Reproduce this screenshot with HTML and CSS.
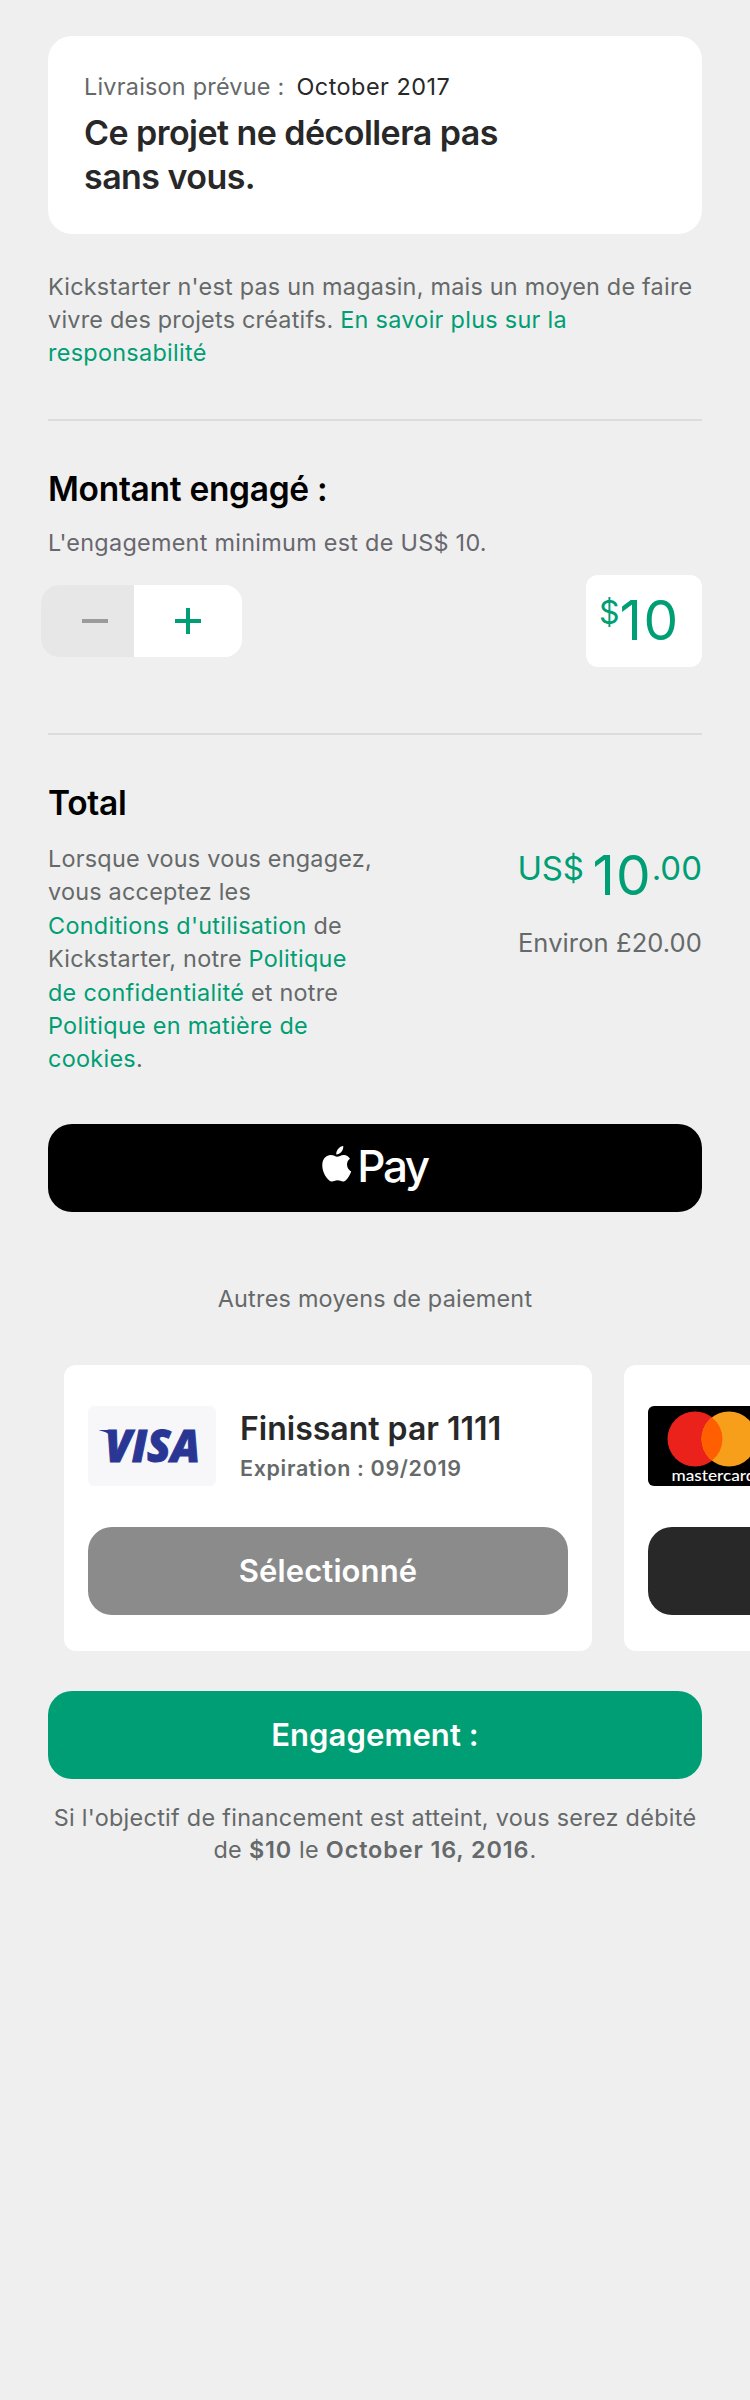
FILE: index.html
```
<!DOCTYPE html>
<html lang="fr">
<head>
<meta charset="utf-8">
<title>Engagement</title>
<link rel="stylesheet" href="styles.css">
</head>
<body>
<main class="page">
  <section class="delivery">
    <p class="body delivery-date"><span>Livraison prévue :</span><span class="dark">October 2017</span></p>
    <p class="delivery-title">Ce projet ne décollera pas<br>sans vous.</p>
  </section>
  <p class="body disclaimer">Kickstarter n'est pas un magasin, mais un moyen de faire<br>vivre des projets créatifs. <a class="link">En savoir plus sur la<br>responsabilité</a></p>
  <hr class="divider">
  <h2 class="heading">Montant engagé :</h2>
  <p class="body minimum">L'engagement minimum est de US$ 10.</p>
  <div class="amount-row">
    <div class="stepper">
      <button class="step minus" aria-label="Moins"><svg width="28" height="28" viewBox="0 0 28 28"><path d="M1 14H27"/></svg></button>
      <button class="step plus" aria-label="Plus"><svg width="28" height="28" viewBox="0 0 28 28"><path d="M1 14H27M14 1V27"/></svg></button>
    </div>
    <div class="amount-box"><span class="currency">$</span><span class="value">10</span></div>
  </div>
  <hr class="divider second">
  <h2 class="heading">Total</h2>
  <div class="total-row">
    <p class="body terms">Lorsque vous vous engagez,<br>vous acceptez les<br><a class="link">Conditions d'utilisation</a> de<br>Kickstarter, notre <a class="link">Politique<br>de confidentialité</a> et notre<br><a class="link">Politique en matière de<br>cookies</a>.</p>
    <div class="total">
      <div class="total-value"><span class="total-small">US$</span><span class="total-big">10</span><span class="total-small cents">.00</span></div>
      <div class="approx">Environ £20.00</div>
    </div>
  </div>
  <button class="button apple-pay">
    <svg width="30" height="37" viewBox="0 0 30 37"><path d="M21.3 0C21.6 4.600 17.900 8.500 14.300 8.400C13.900 4.300 17.700.300 21.300 0ZM28 12.800C26.200 14 25 15.800 25 18.600C25 21.900 26.900 24.400 29.200 25.400C28.200 28.600 26.300 31.600 24.100 33.900C21 37 18.800 34.300 15.500 34.300C12 34.300 10.300 37 7.300 34.500C3 31 0 24.200.300 18.500C.500 12.500 4.500 9 8.700 9C11.500 9 13.500 10.700 15.200 10.700C17 10.700 19 8.800 22 8.900C24.500 9 26.500 10.200 28 12.800Z"/></svg>
    <span>Pay</span>
  </button>
  <p class="body others">Autres moyens de paiement</p>
  <div class="cards">
    <article class="card">
      <div class="card-head">
        <svg class="brand" width="128" height="80" viewBox="0 0 128 80"><rect width="128" height="80" rx="6" fill="#f7f7fa"/><g fill="#2a3694"><text class="visa-text" x="17" y="55.500" textLength="95" lengthAdjust="spacingAndGlyphs">VISA</text><path d="M10.500 24H25.500L27 34C23.500 28.500 17 25.500 10.500 24Z"/></g></svg>
        <div><div class="card-name">Finissant par 1111</div><div class="card-exp">Expiration : 09/2019</div></div>
      </div>
      <button class="button selected">Sélectionné</button>
    </article>
    <article class="card">
      <div class="card-head">
        <svg class="brand" width="128" height="80" viewBox="0 0 128 80"><rect width="128" height="80" rx="6"/><circle cx="47" cy="33" r="27.500" fill="#eb221c"/><circle cx="81" cy="33" r="27.500" fill="#f79f1a"/><path d="M64 11.400A27.500 27.500 0 0 1 64 54.600A27.500 27.500 0 0 1 64 11.400Z" fill="#ff5f00"/><text class="mc-text" x="23.500" y="74.500" textLength="84" lengthAdjust="spacingAndGlyphs">mastercard</text></svg>
      </div>
      <button class="button other"></button>
    </article>
  </div>
  <button class="button engage">Engagement :</button>
  <p class="body final">Si l'objectif de financement est atteint, vous serez débité<br>de <b>$10</b> le <b>October 16, 2016</b>.</p>
</main>
</body>
</html>
```
FILE: styles.css
```
* { box-sizing: border-box; }
body { margin: 0; background: #efefef; font-family: Inter, "Liberation Sans", sans-serif; }
p, h2 { margin: 0; }
button { border: 0; padding: 0; font: inherit; }
.page { height: 2400px; padding: 36px 48px 0; overflow: hidden; }
.body { font-size: 23.4px; line-height: 33px; letter-spacing: 0.23px; color: #656969; white-space: nowrap; }
.link { color: #009e74; letter-spacing: 0.3px; }
.dark { color: #282828; letter-spacing: 0.5px; }
.delivery { height: 198px; padding: 34px 36px 0; border-radius: 24px; background: #fff; }
.delivery-date { display: flex; gap: 12px; }
.delivery-title { margin-top: 8px; font-size: 34px; line-height: 44px; font-weight: 600; letter-spacing: -0.55px; color: #282828; white-space: nowrap; }
.disclaimer { margin-top: 36px; }
.divider { height: 2px; margin: 50px 0 48px; border: 0; background: #dcdcdc; }
.divider.second { margin-top: 66px; }
.heading { font-size: 33.500px; line-height: 40px; font-weight: 600; letter-spacing: -0.3px; color: #000; }
.minimum { margin-top: 17px; letter-spacing: 0.28px; color: #68676e; }
.amount-row { display: flex; justify-content: space-between; align-items: center; height: 92px; margin-top: 16px; }
.stepper { display: flex; width: 201px; height: 72px; margin-left: -7px; border-radius: 18px; overflow: hidden; background: #fff; }
.step { display: flex; align-items: center; background: #fff; }
.step path { fill: none; stroke: #009e74; stroke-width: 4; }
.minus { width: 93px; padding-left: 40px; background: #e7e7e7; }
.minus path { stroke: #9b9b9b; }
.plus { width: 108px; padding-left: 40px; }
.amount-box { display: flex; width: 116px; height: 92px; padding: 14px 0 0 13px; border-radius: 12px; background: #fff; color: #009e74; }
.currency { font-size: 32px; line-height: 48px; }
.value { font-size: 55px; line-height: 62px; letter-spacing: 1.5px; }
.total-row { display: flex; justify-content: space-between; margin-top: 19px; }
.terms { line-height: 33.4px; }
.total { text-align: right; white-space: nowrap; }
.total-value { display: flex; justify-content: flex-end; height: 62px; color: #009e74; }
.total-small { font-size: 33px; line-height: 52px; letter-spacing: -0.3px; }
.total-big { margin-left: 9px; font-size: 55px; line-height: 66px; letter-spacing: 1px; }
.cents { letter-spacing: 0; }
.approx { margin-top: 19px; font-size: 25.500px; line-height: 40px; letter-spacing: 0.1px; color: #656969; }
.button { display: flex; align-items: center; justify-content: center; width: 100%; height: 88px; border-radius: 24px; color: #fff; font-size: 31px; font-weight: 600; letter-spacing: 0.1px; }
.apple-pay { gap: 5px; margin-top: 48px; padding-bottom: 4px; background: #000; font-size: 44px; font-weight: 500; letter-spacing: -2.4px; }
.apple-pay svg { margin-bottom: 2px; }
.apple-pay path { fill: #fff; }
.others { margin-top: 70px; text-align: center; }
.cards { display: flex; gap: 32px; margin: 50px -48px 0 16px; overflow: hidden; }
.card { flex: none; width: 528px; height: 286px; padding: 41px 24px 0; border-radius: 12px; background: #fff; }
.card-head { display: flex; gap: 24px; height: 80px; margin-bottom: 41px; white-space: nowrap; }
.card-name { margin-top: 3px; font-size: 32px; line-height: 40px; font-weight: 600; letter-spacing: 0; color: #282828; }
.card-exp { margin-top: 4px; font-size: 21.500px; line-height: 30px; font-weight: 600; letter-spacing: 0.65px; color: #656969; }
.visa-text { font: italic 800 44px "Open Sans", sans-serif; stroke: #2a3694; stroke-width: 1px; }
.mc-text { font: 500 15.500px Lato, sans-serif; fill: #fff; }
.selected { background: #8b8b8b; }
.other { background: #282828; }
.engage { margin-top: 40px; background: #009e74; }
.final { margin-top: 23px; line-height: 32.500px; letter-spacing: 0.29px; text-align: center; }
.final b { font-weight: 600; letter-spacing: 0.9px; }
```
